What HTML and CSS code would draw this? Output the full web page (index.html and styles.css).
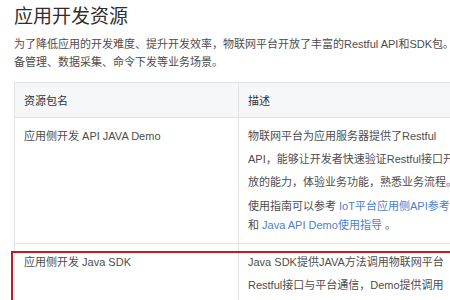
FILE: index.html
```html
<!DOCTYPE html>
<html lang="zh-CN">
<head>
  <meta charset="UTF-8" />
  <title>应用开发资源</title>
  <link rel="stylesheet" href="styles.css">
</head>
<body>
  <div class="doc">
    <h2 class="title">应用开发资源</h2>
    <p class="intro">为了降低应用的开发难度、提升开发效率，物联网平台开放了丰富的Restful API和SDK包。应用服务器可以通过调用物联网平台的API，实现安全接入、设<br>备管理、数据采集、命令下发等业务场景。</p>

    <table class="res-table">
      <thead>
        <tr>
          <th class="col-name">资源包名</th>
          <th class="col-desc">描述</th>
        </tr>
      </thead>
      <tbody>
        <tr>
          <td>应用侧开发 API JAVA Demo</td>
          <td>
            <p>物联网平台为应用服务器提供了Restful<br>API，能够让开发者快速验证Restful接口开<br>放的能力，体验业务功能，熟悉业务流程。</p>
            <p class="guide">使用指南可以参考 <a href="#">IoT平台应用侧API参考</a><br>和 <a href="#">Java API Demo使用指导</a> 。</p>
          </td>
        </tr>
        <tr class="marked">
          <td>应用侧开发 Java SDK</td>
          <td>
            <p>Java SDK提供JAVA方法调用物联网平台<br>Restful接口与平台通信，Demo提供调用<br>SDK接口的样例代码。</p>
          </td>
        </tr>
      </tbody>
    </table>
  </div>
</body>
</html>
```

FILE: styles.css
```css
body {
  margin: 0;
  background: #fff;
  font-family: "Liberation Sans", "Noto Sans CJK SC", sans-serif;
  color: #4d4d4d;
  overflow: hidden;
}
.doc {
  width: 620px;
  padding: 4px 0 0 14px;
}
.title {
  margin: 0;
  font-size: 19px;
  line-height: 26px;
  font-weight: normal;
  color: #2e2e2e;
}
.intro {
  margin: 5px 0 11px;
  font-size: 11px;
  line-height: 18px;
  color: #4d4d4d;
  white-space: nowrap;
}
.res-table {
  border-collapse: collapse;
  font-size: 11px;
  color: #4d4d4d;
}
.res-table th,
.res-table td {
  border: 1px solid #e3e3e3;
  text-align: left;
  vertical-align: top;
  padding: 0 9px;
}
.res-table th {
  background: #f6f7f9;
  font-weight: normal;
  color: #333;
  height: 34px;
  vertical-align: middle;
}
.col-name { width: 205px; }
.col-desc { width: 300px; }
.res-table td {
  padding-top: 7px;
  padding-bottom: 8px;
  line-height: 23px;
  white-space: nowrap;
}
.res-table td p {
  margin: 0;
}
.res-table .guide {
  line-height: 19px;
  margin-top: 3px;
}
.res-table a {
  color: #4a7fd0;
  text-decoration: none;
}
.marked {
  position: relative;
}
.marked::after {
  content: "";
  position: absolute;
  left: -4px;
  right: -4px;
  top: 7px;
  height: 120px;
  border: 2px solid #c41a22;
}
```
